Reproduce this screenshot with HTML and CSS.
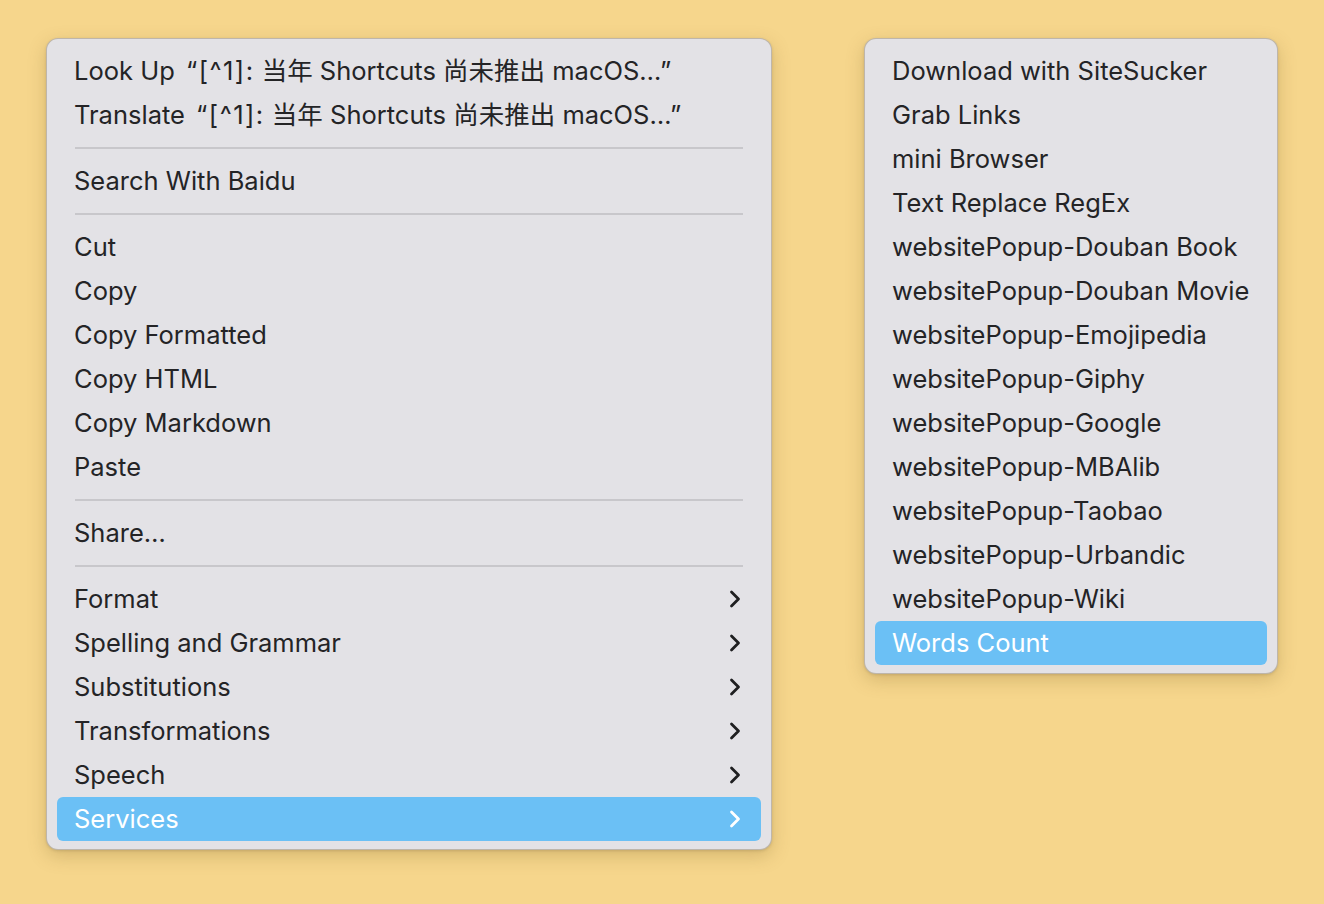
FILE: index.html
```html
<!DOCTYPE html>
<html lang="en">
<head>
<meta charset="utf-8">
<title>Context Menu</title>
<link rel="stylesheet" href="styles.css">
</head>
<body>
<div class="stage">
  <div class="menu menu-main">
    <div class="item"><span>Look Up <span class="q">“[^1]:</span> 当年 Shortcuts 尚未推出 macOS…”</span></div>
    <div class="item"><span>Translate <span class="q">“[^1]:</span> 当年 Shortcuts 尚未推出 macOS…”</span></div>
    <div class="sep"></div>
    <div class="item"><span>Search With Baidu</span></div>
    <div class="sep"></div>
    <div class="item"><span>Cut</span></div>
    <div class="item"><span>Copy</span></div>
    <div class="item"><span>Copy Formatted</span></div>
    <div class="item"><span>Copy HTML</span></div>
    <div class="item"><span>Copy Markdown</span></div>
    <div class="item"><span>Paste</span></div>
    <div class="sep"></div>
    <div class="item"><span>Share…</span></div>
    <div class="sep"></div>
    <div class="item sub"><span>Format</span><svg class="chev" viewBox="0 0 12 18"><path d="M2.5 2 L9.5 9 L2.5 16"/></svg></div>
    <div class="item sub"><span>Spelling and Grammar</span><svg class="chev" viewBox="0 0 12 18"><path d="M2.5 2 L9.5 9 L2.5 16"/></svg></div>
    <div class="item sub"><span>Substitutions</span><svg class="chev" viewBox="0 0 12 18"><path d="M2.5 2 L9.5 9 L2.5 16"/></svg></div>
    <div class="item sub"><span>Transformations</span><svg class="chev" viewBox="0 0 12 18"><path d="M2.5 2 L9.5 9 L2.5 16"/></svg></div>
    <div class="item sub"><span>Speech</span><svg class="chev" viewBox="0 0 12 18"><path d="M2.5 2 L9.5 9 L2.5 16"/></svg></div>
    <div class="item sub active"><span>Services</span><svg class="chev" viewBox="0 0 12 18"><path d="M2.5 2 L9.5 9 L2.5 16"/></svg></div>
  </div>
  <div class="menu menu-services">
    <div class="item"><span>Download with SiteSucker</span></div>
    <div class="item"><span>Grab Links</span></div>
    <div class="item"><span>mini Browser</span></div>
    <div class="item"><span>Text Replace RegEx</span></div>
    <div class="item"><span>websitePopup-Douban Book</span></div>
    <div class="item"><span>websitePopup-Douban Movie</span></div>
    <div class="item"><span>websitePopup-Emojipedia</span></div>
    <div class="item"><span>websitePopup-Giphy</span></div>
    <div class="item"><span>websitePopup-Google</span></div>
    <div class="item"><span>websitePopup-MBAlib</span></div>
    <div class="item"><span>websitePopup-Taobao</span></div>
    <div class="item"><span>websitePopup-Urbandic</span></div>
    <div class="item"><span>websitePopup-Wiki</span></div>
    <div class="item active"><span>Words Count</span></div>
  </div>
</div>
</body>
</html>
```
FILE: styles.css
```css
* { box-sizing: border-box; }
html, body {
  margin: 0;
  padding: 0;
  width: 1324px;
  height: 904px;
  background: #f6d68c;
  overflow: hidden;
}
body {
  font-family: Inter, "Noto Sans CJK SC", sans-serif;
  font-size: 25.5px;
  color: #242426;
}
.stage {
  display: flex;
  align-items: flex-start;
  gap: 92px;
  padding: 38px 0 0 46px;
}
.menu {
  background: #e3e2e6;
  border: 1px solid rgba(120, 100, 60, 0.35);
  border-radius: 12px;
  box-shadow: 0 6px 18px rgba(120, 90, 30, 0.25), 0 1px 3px rgba(0,0,0,0.12);
  padding: 10px 10px 8px;
  display: flex;
  flex-direction: column;
}
.menu-main { width: 726px; }
.menu-services { width: 414px; }
.item {
  height: 44px;
  display: flex;
  align-items: center;
  justify-content: space-between;
  padding: 0 20px 0 17px;
  border-radius: 6px;
  white-space: nowrap;
  line-height: 30px;
}
.item > span {
  display: block;
  height: 30px;
  line-height: 30px;
}
.item .q {
  letter-spacing: 1.5px;
  margin-left: 4px;
}
.item.active {
  background: #6bc0f5;
  color: #ffffff;
}
.chev {
  width: 12px;
  height: 18px;
  fill: none;
  stroke: #1f1f21;
  stroke-width: 2.8;
  stroke-linecap: round;
  stroke-linejoin: round;
}
.item.active .chev { stroke: #ffffff; }
.sep {
  height: 2px;
  margin: 10px 18px;
  background: #c8c7cb;
}
```
